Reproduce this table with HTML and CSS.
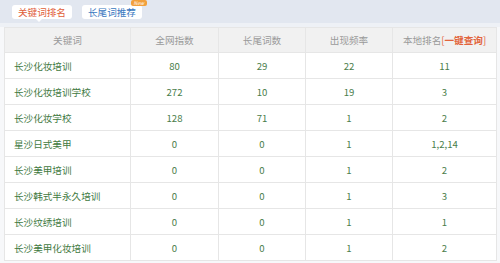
FILE: index.html
```html
<!DOCTYPE html>
<html lang="zh">
<head>
<meta charset="utf-8">
<link rel="stylesheet" href="styles.css">
</head>
<body>
<div class="tabs">
  <span class="tab active">关键词排名</span>
  <span class="tab">长尾词推荐<span class="badge">New</span></span>
</div>
<div class="strip"></div>
<table class="grid">
  <colgroup>
    <col class="c1"><col class="c2"><col class="c3"><col class="c4"><col class="c5">
  </colgroup>
  <thead>
    <tr><th>关键词</th><th>全网指数</th><th>长尾词数</th><th>出现频率</th><th>本地排名<span class="query">[<b>一键查询</b>]</span></th></tr>
  </thead>
  <tbody>
    <tr><td class="kw">长沙化妆培训</td><td>80</td><td>29</td><td>22</td><td>11</td></tr>
    <tr><td class="kw">长沙化妆培训学校</td><td>272</td><td>10</td><td>19</td><td>3</td></tr>
    <tr><td class="kw">长沙化妆学校</td><td>128</td><td>71</td><td>1</td><td>2</td></tr>
    <tr><td class="kw">星沙日式美甲</td><td>0</td><td>0</td><td>1</td><td>1,2,14</td></tr>
    <tr><td class="kw">长沙美甲培训</td><td>0</td><td>0</td><td>1</td><td>2</td></tr>
    <tr><td class="kw">长沙韩式半永久培训</td><td>0</td><td>0</td><td>1</td><td>3</td></tr>
    <tr><td class="kw">长沙纹绣培训</td><td>0</td><td>0</td><td>1</td><td>1</td></tr>
    <tr><td class="kw">长沙美甲化妆培训</td><td>0</td><td>0</td><td>1</td><td>2</td></tr>
  </tbody>
</table>
</body>
</html>
```
FILE: styles.css
```css
html, body {
  margin: 0;
  padding: 0;
  background: #f7f8fa;
  font-family: "Noto Sans CJK SC", "Noto Sans", sans-serif;
}
.tabs {
  height: 23px;
  background: #e2e7f0;
  display: flex;
  align-items: flex-start;
  gap: 10px;
  padding: 5px 0 0 12px;
  box-sizing: border-box;
}
.tab {
  position: relative;
  display: inline-block;
  height: 14px;
  line-height: 14px;
  padding: 0 6px;
  background: #fff;
  border-radius: 3px;
  font-size: 9.6px;
  color: #3a78c0;
}
.tab.active {
  color: #e0603a;
}
.tab.active::after {
  content: "";
  position: absolute;
  left: 24px;
  bottom: -3px;
  border-left: 3px solid transparent;
  border-right: 3px solid transparent;
  border-top: 3px solid #fff;
}
.badge {
  position: absolute;
  right: -5px;
  top: -5px;
  height: 6px;
  padding: 0 3px;
  background: #f2a03c;
  color: #fff;
  font-size: 5px;
  line-height: 6px;
  border-radius: 2px;
  font-style: italic;
}
.strip {
  height: 4px;
  background: #eef1f6;
}
.grid {
  margin-left: 4px;
  width: 492px;
  border-collapse: collapse;
  table-layout: fixed;
  background: #fff;
  font-size: 9.6px;
}
.c1 { width: 126px; }
.c2 { width: 88px; }
.c3 { width: 87px; }
.c4 { width: 87px; }
.c5 { width: 104px; }
.grid th, .grid td {
  border: 1px solid #e6e6e6;
  text-align: center;
  padding: 0;
  white-space: nowrap;
}
.grid th {
  height: 24px;
  background: #f1f1f1;
  color: #9a9a9a;
  font-weight: normal;
}
.grid td {
  height: 25px;
  color: #4a7d4a;
}
.grid td.kw {
  text-align: left;
  padding-left: 9px;
  color: #3f7a3f;
}
.query {
  color: #e2643c;
}
.query b {
  font-weight: bold;
}
```
